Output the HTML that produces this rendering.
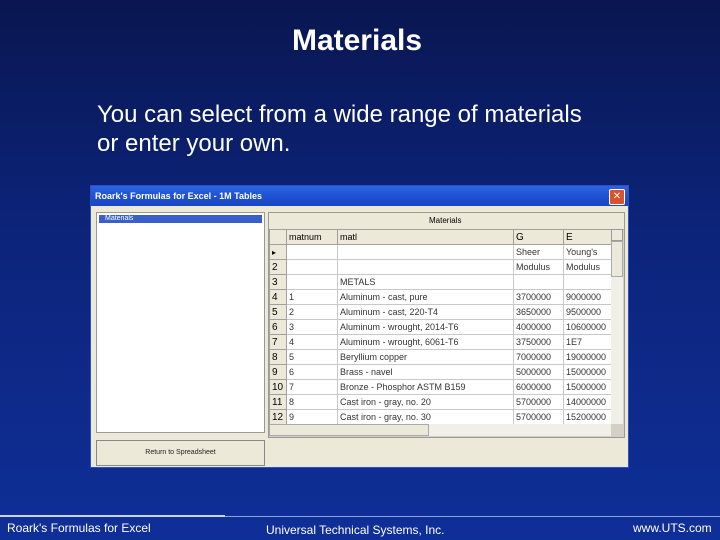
<!DOCTYPE html>
<html><head><style>
body{margin:0;width:720px;height:540px;overflow:hidden;background:linear-gradient(#091650 0%,#0c2378 40%,#0f2f98 100%);font-family:"Liberation Sans",sans-serif;position:relative}
.a{position:absolute}
h1{position:absolute;left:0;width:714px;top:24px;margin:0;text-align:center;color:#fff;font-size:30px;font-weight:bold}
.p{color:#fff;font-size:24px;left:97px;line-height:29px;top:100px;white-space:nowrap}
.win{left:90px;top:185px;width:539px;height:283px;background:#ece9d8;border:1px solid #2a50c8;box-sizing:border-box}
.tb{left:0;top:0;width:537px;height:20px;background:linear-gradient(#2e63e0,#1d4fd0 60%,#1a46c0);color:#fff;font-size:9px;font-weight:bold;line-height:20px;padding-left:4px;box-sizing:border-box}
.x{right:3px;top:3px;width:14px;height:14px;background:#d9522e;border:1px solid #fff;border-radius:2px;color:#fff;font-size:10px;line-height:14px;text-align:center}
table{border-collapse:collapse;font-size:9px;color:#333}
td{border:1px solid #c8c8c8;height:14px;padding:0 2px;white-space:nowrap;overflow:hidden;background:#fff}
td.h{background:#ece9d8;border-color:#a0a0a0;color:#000;font-size:10px}
.ft{color:#fff;font-size:12px;top:521px}
</style></head><body>
<h1>Materials</h1>
<div class="a p">You can select from a wide range of materials<br>or enter your own.</div>
<div class="a win">
 <div class="a tb">Roark's Formulas for Excel - 1M Tables</div>
 <div class="a x">✕</div>
 <div class="a" style="left:5px;top:26px;width:167px;height:219px;background:#fff;border:1px solid #999"><div style="margin:2px 2px;height:8px;background:#3a5fcd;color:#fff;font-size:7px;line-height:8px;padding-left:6px">Materials</div></div>
 <div class="a" style="left:5px;top:254px;width:167px;height:24px;border:1px solid #888;background:#ece9d8;font-size:7px;text-align:center;line-height:24px;color:#222">Return to Spreadsheet</div>
 <div class="a" style="left:177px;top:26px;width:355px;height:224px;border:1px solid #999;background:#d4d0c8;overflow:hidden">
  <div style="height:16px;background:#ece9d8;border-bottom:1px solid #aaa;font-size:8px;line-height:16px;padding-left:160px">Materials</div>
  <table style="position:absolute;top:16px;left:0;width:342px;table-layout:fixed">
   <colgroup><col style="width:17px"><col style="width:51px"><col style="width:176px"><col style="width:50px"><col style="width:48px"></colgroup>
   <tr><td class="h"></td><td class="h" style="font-size:9px">matnum</td><td class="h" style="font-size:9px">matl</td><td class="h">G</td><td class="h">E</td></tr>
   <tr><td class="h" style="font-size:8px">▸</td><td></td><td></td><td>Sheer</td><td>Young's</td></tr>
   <tr><td class="h">2</td><td></td><td></td><td>Modulus</td><td>Modulus</td></tr>
   <tr><td class="h">3</td><td></td><td>METALS</td><td></td><td></td></tr>
   <tr><td class="h">4</td><td>1</td><td>Aluminum - cast, pure</td><td>3700000</td><td>9000000</td></tr>
   <tr><td class="h">5</td><td>2</td><td>Aluminum - cast, 220-T4</td><td>3650000</td><td>9500000</td></tr>
   <tr><td class="h">6</td><td>3</td><td>Aluminum - wrought, 2014-T6</td><td>4000000</td><td>10600000</td></tr>
   <tr><td class="h">7</td><td>4</td><td>Aluminum - wrought, 6061-T6</td><td>3750000</td><td>1E7</td></tr>
   <tr><td class="h">8</td><td>5</td><td>Beryllium copper</td><td>7000000</td><td>19000000</td></tr>
   <tr><td class="h">9</td><td>6</td><td>Brass - navel</td><td>5000000</td><td>15000000</td></tr>
   <tr><td class="h">10</td><td>7</td><td>Bronze - Phosphor ASTM B159</td><td>6000000</td><td>15000000</td></tr>
   <tr><td class="h">11</td><td>8</td><td>Cast iron - gray, no. 20</td><td>5700000</td><td>14000000</td></tr>
   <tr><td class="h">12</td><td>9</td><td>Cast iron - gray, no. 30</td><td>5700000</td><td>15200000</td></tr>
  </table>
  <div class="a" style="left:342px;top:16px;width:12px;height:195px;background:#f0efe8"><div style="height:12px;background:#ece9d8;border:1px solid #999;box-sizing:border-box"></div><div style="height:36px;background:#ece9d8;border:1px solid #aaa;box-sizing:border-box"></div></div>
  <div class="a" style="left:0;top:211px;width:342px;height:12px;background:#f0efe8"><div class="a" style="left:0;width:160px;height:12px;background:#ece9d8;border:1px solid #aaa;box-sizing:border-box"></div></div>
 </div>
</div>
<div class="a" style="left:0;top:515px;width:225px;height:2px;background:#c8d4f0"></div>
<div class="a" style="left:225px;top:516px;width:495px;height:1px;background:#8aa0e0"></div>
<div class="a ft" style="left:7px">Roark's Formulas for Excel</div>
<div class="a ft" style="left:266px;top:523px">Universal Technical Systems, Inc.</div>
<div class="a ft" style="left:633px">www.UTS.com</div>
</body></html>
